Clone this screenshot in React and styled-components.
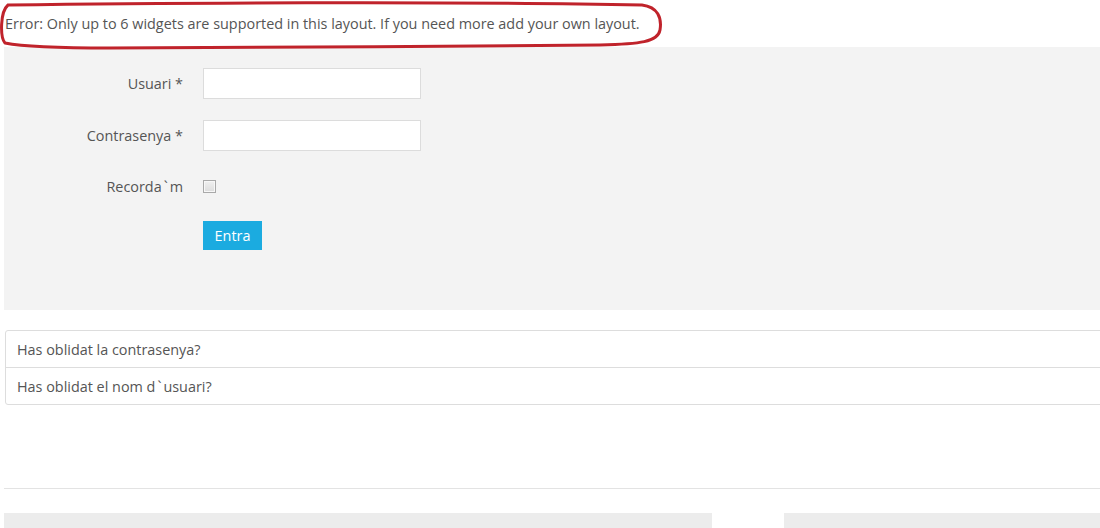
import React from "react";
import styled, { createGlobalStyle } from "styled-components";

const Global = createGlobalStyle`
  html, body { margin: 0; padding: 0; background: #fff; overflow: hidden; }
  body { font-family: "Open Sans", "Noto Sans", sans-serif; font-size: 14.4px; color: #555; }
  * { box-sizing: border-box; }
`;

const Page = styled.div`
  width: 1100px;
  height: 528px;
  overflow: hidden;
  position: relative;
`;

const ErrorBar = styled.div`
  height: 47px;
  padding: 14px 0 0 5px;
  line-height: 20px;
  color: #555;
  position: relative;
`;

const Ellipse = styled.svg`
  position: absolute;
  left: 0;
  top: 0;
  width: 670px;
  height: 52px;
  pointer-events: none;
  z-index: 2;
`;

const Panel = styled.div`
  margin-left: 4px;
  width: 1100px;
  height: 263px;
  background: #f3f3f3;
  padding-top: 21px;
  display: flex;
  flex-direction: column;
  gap: 21px;
`;

const Row = styled.div`
  display: grid;
  grid-template-columns: 179px 218px;
  column-gap: 20px;
  align-items: center;
  height: ${(p) => p.$h || 31}px;
`;

const Label = styled.label`
  text-align: right;
  color: #555;
  font-size: 14.4px;
`;

const Tick = styled.span`
  padding: 0 2px;
`;

const Input = styled.input`
  height: 31px;
  width: 218px;
  border: 1px solid #dcdcdc;
  background: #fff;
  margin: 0;
`;

const Check = styled.span`
  display: block;
  width: 13px;
  height: 13px;
  border: 1px solid #a9a9a9;
  background: linear-gradient(#f0f0f0, #dcdcdc);
  box-shadow: inset 0 0 0 1px #f7f7f7;
`;

const Button = styled.button`
  width: 59px;
  height: 29px;
  border: none;
  margin: 0;
  background: #1babe0;
  color: #fff;
  font-family: "Open Sans", sans-serif;
  font-size: 14.4px;
  padding: 0;
`;

const List = styled.div`
  margin: 20px 0 0 5px;
  width: 1100px;
  border: 1px solid #dddddd;
  border-radius: 3px;
  display: flex;
  flex-direction: column;
`;

const Item = styled.div`
  height: ${(p) => (p.$first ? 36 : 37)}px;
  padding-left: 11px;
  display: flex;
  align-items: center;
  border-top: ${(p) => (p.$first ? "none" : "1px solid #dddddd")};
  color: #555;
`;

const Rule = styled.hr`
  margin: 83px 0 0 4px;
  width: 1100px;
  border: none;
  border-top: 1px solid #e3e3e3;
  height: 0;
`;

const Bottom = styled.div`
  margin: 24px 0 0 4px;
  display: grid;
  grid-template-columns: 708px 316px;
  column-gap: 72px;
`;

const Box = styled.div`
  height: 20px;
  background: #ececec;
`;

export default function App() {
  return (
    <Page>
      <Global />
      <ErrorBar>
        Error: Only up to 6 widgets are supported in this layout. If you need more add your own layout.
        <Ellipse viewBox="0 0 670 52">
          <path
            d="M 8 5 C 150 3, 450 1, 642 5 C 658 7, 662 18, 660 30 C 658 42, 640 44, 600 45 C 450 47, 250 47, 110 48 C 60 48, 20 46, 5 43 C 0 37, 0 12, 8 5 Z"
            fill="none"
            stroke="#c0232b"
            strokeWidth="3"
          />
        </Ellipse>
      </ErrorBar>
      <Panel>
        <Row>
          <Label>Usuari *</Label>
          <Input type="text" />
        </Row>
        <Row>
          <Label>Contrasenya *</Label>
          <Input type="password" />
        </Row>
        <Row $h={28}>
          <Label>
            Recorda<Tick>`</Tick>m
          </Label>
          <Check />
        </Row>
        <Row $h={29}>
          <span />
          <Button>Entra</Button>
        </Row>
      </Panel>
      <List>
        <Item $first>Has oblidat la contrasenya?</Item>
        <Item>
          Has oblidat el nom d<Tick>`</Tick>usuari?
        </Item>
      </List>
      <Rule />
      <Bottom>
        <Box />
        <Box />
      </Bottom>
    </Page>
  );
}
